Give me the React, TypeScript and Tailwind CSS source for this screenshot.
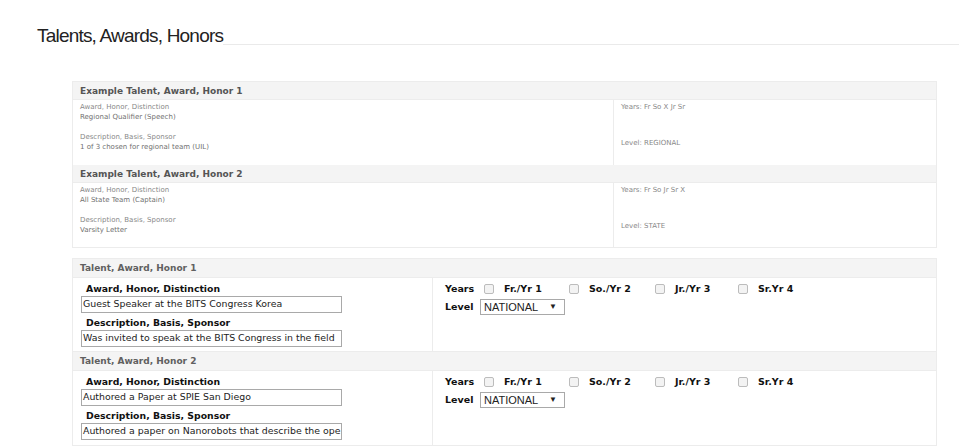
const small = "font-['DejaVu_Sans',Verdana,sans-serif]"

type Example = {
  title: string
  award: string
  description: string
  years: string
  level: string
}

const examples: Example[] = [
  {
    title: 'Example Talent, Award, Honor 1',
    award: 'Regional Qualifier (Speech)',
    description: '1 of 3 chosen for regional team (UIL)',
    years: 'Years: Fr So X Jr Sr',
    level: 'Level: REGIONAL',
  },
  {
    title: 'Example Talent, Award, Honor 2',
    award: 'All State Team (Captain)',
    description: 'Varsity Letter',
    years: 'Years: Fr So Jr Sr X',
    level: 'Level: STATE',
  },
]

type Entry = {
  title: string
  award: string
  description: string
}

const entries: Entry[] = [
  {
    title: 'Talent, Award, Honor 1',
    award: 'Guest Speaker at the BITS Congress Korea',
    description: 'Was invited to speak at the BITS Congress in the field',
  },
  {
    title: 'Talent, Award, Honor 2',
    award: 'Authored a Paper at SPIE San Diego',
    description: 'Authored a paper on Nanorobots that describe the ope',
  },
]

const yearOptions = ['Fr./Yr 1', 'So./Yr 2', 'Jr./Yr 3', 'Sr.Yr 4']

function ExampleBlock({ item }: { item: Example }) {
  return (
    <div>
      <div className="h-[18px] border-b border-[#ececec] bg-[#f4f4f4] pl-[7px] text-[9px] leading-[18px] font-bold text-[#555]">
        {item.title}
      </div>
      <div className="flex h-[65px] text-[7px] leading-[10px]">
        <div className="w-[541px] border-r border-[#ececec] pt-[2px] pl-[7px]">
          <div className="text-[#888]">Award, Honor, Distinction</div>
          <div className="text-[#707070]">{item.award}</div>
          <div className="mt-[10px] text-[#888]">Description, Basis, Sponsor</div>
          <div className="text-[#707070]">{item.description}</div>
        </div>
        <div className="flex-1 pt-[2px] pl-[7px] text-[#888]">
          <div>{item.years}</div>
          <div className="mt-[26px]">{item.level}</div>
        </div>
      </div>
    </div>
  )
}

function Checkbox() {
  return <span className="inline-block h-[10px] w-[10px] rounded-[2px] border border-[#bcbcbc] bg-[#f3f3f3]" />
}

function EntryBlock({ item, last }: { item: Entry; last?: boolean }) {
  return (
    <div>
      <div className="h-[19px] border-b border-[#ececec] bg-[#f4f4f4] pl-[7px] text-[9px] leading-[19px] font-bold text-[#606060]">
        {item.title}
      </div>
      <div className={`flex h-[74px] ${last ? '' : 'border-b border-[#ececec]'}`}>
        <div className="w-[360px] border-r border-[#ececec] pt-[4px] pl-[8px]">
          <div className="pl-[5px] text-[9.3px] leading-[14px] font-bold text-[#111]">Award, Honor, Distinction</div>
          <div className="flex h-[17px] w-[261px] items-center border border-[#a9a9a9] px-[1px] text-[9.4px] whitespace-nowrap text-[#222]">
            {item.award}
          </div>
          <div className="mt-[3px] pl-[5px] text-[9.3px] leading-[14px] font-bold text-[#111]">Description, Basis, Sponsor</div>
          <div className="flex h-[17px] w-[261px] items-center overflow-hidden border border-[#a9a9a9] px-[1px] text-[9.4px] whitespace-nowrap text-[#222]">
            {item.description}
          </div>
        </div>
        <div className="flex-1 pt-[4px] pl-[12px] text-[9.5px] font-bold text-[#111]">
          <div className="flex h-[14px] items-center">
            <span className="w-[39px]">Years</span>
            {yearOptions.map((y, i) => (
              <span key={y} className={`flex items-center ${i === 0 ? 'w-[85px]' : i === 1 ? 'w-[86px]' : 'w-[83px]'}`}>
                <Checkbox />
                <span className="ml-[10px]">{y}</span>
              </span>
            ))}
          </div>
          <div className="mt-[3px] flex items-center">
            <span className="w-[35px]">Level</span>
            <span className="flex h-[16px] w-[85px] items-center justify-between border border-[#a9a9a9] px-[3px] font-['Liberation_Sans',Arial,sans-serif] text-[11px] font-normal text-[#222]">
              NATIONAL
              <span className="mr-[4px] text-[8px]">▼</span>
            </span>
          </div>
        </div>
      </div>
    </div>
  )
}

export default function App() {
  return (
    <div className={`h-[447px] w-[959px] overflow-hidden bg-white ${small}`}>
      <div className="flex items-end pt-[26px] pl-[37px]">
        <h2 className="font-['Liberation_Sans',Arial,sans-serif] text-[19px] leading-[20px] tracking-[-0.8px] text-[#222]">
          Talents, Awards, Honors
        </h2>
        <div className="mb-[1px] flex-1 border-b border-[#eaeaea]" />
      </div>

      <div className="mt-[35px] ml-[72px] w-[865px] border border-[#ececec]">
        {examples.map((e, i) => (
          <div key={e.title} className={i === 1 ? 'h-[82px] overflow-hidden' : ''}>
            <ExampleBlock item={e} />
          </div>
        ))}
      </div>

      <div className="mt-[10px] ml-[72px] w-[865px] border border-[#ececec]">
        {entries.map((e, i) => (
          <EntryBlock key={e.title} item={e} last={i === entries.length - 1} />
        ))}
      </div>
    </div>
  )
}
